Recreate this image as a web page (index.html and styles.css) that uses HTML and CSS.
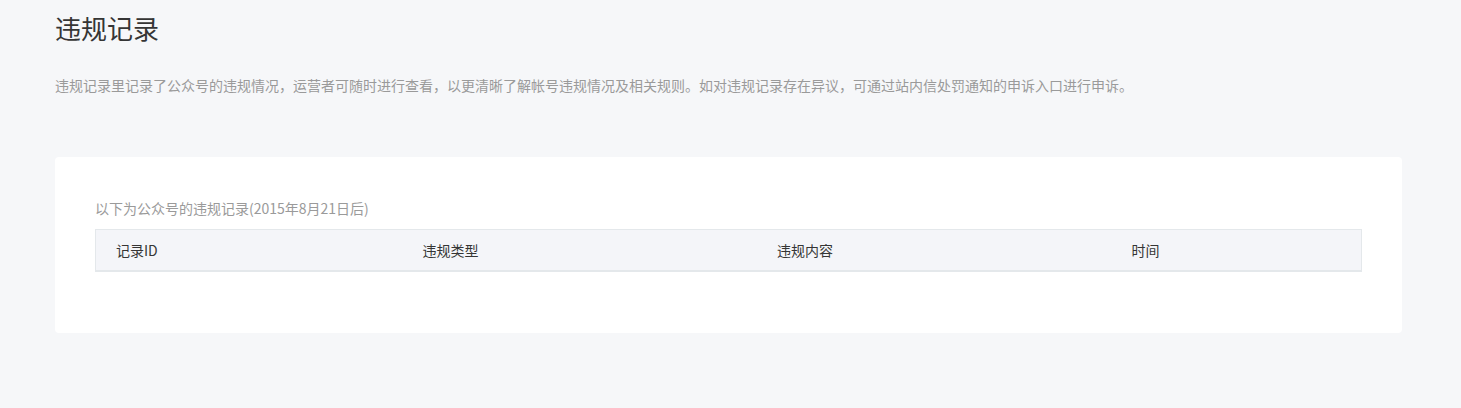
FILE: index.html
```html
<!DOCTYPE html>
<html lang="zh-CN">

<head>
    <meta charset="UTF-8">
    <meta name="viewport" content="width=device-width, initial-scale=1.0">
    <title>违规记录</title>
    <link rel="stylesheet" href="styles.css">
</head>

<body>
    <div class="page">
        <h2 class="page-title">违规记录</h2>
        <p class="page-desc">违规记录里记录了公众号的违规情况，运营者可随时进行查看，以更清晰了解帐号违规情况及相关规则。如对违规记录存在异议，可通过站内信处罚通知的申诉入口进行申诉。</p>

        <div class="card">
            <p class="card-tips">以下为公众号的违规记录(2015年8月21日后)</p>
            <table class="record-table">
                <thead>
                    <tr>
                        <th class="col-id">记录ID</th>
                        <th class="col-type">违规类型</th>
                        <th class="col-content">违规内容</th>
                        <th class="col-time">时间</th>
                    </tr>
                </thead>
                <tbody></tbody>
            </table>
        </div>
    </div>
</body>

</html>
```

FILE: styles.css
```css
* {
    padding: 0;
    margin: 0;
    box-sizing: border-box;
}

body {
    background-color: #f6f7f9;
    font-family: "Noto Sans CJK SC", "Liberation Sans", sans-serif;
    color: #353535;
}

.page {
    padding: 0 59px 0 55px;
}

.page-title {
    margin-top: 10px;
    font-size: 26px;
    line-height: 36px;
    font-weight: 400;
    color: #353535;
}

.page-desc {
    margin-top: 29px;
    font-size: 14px;
    line-height: 20px;
    color: #9a9a9a;
}

.card {
    margin-top: 62px;
    padding: 41px 40px 61px;
    background-color: #fff;
    border-radius: 4px;
}

.card-tips {
    font-size: 14px;
    line-height: 20px;
    color: #9a9a9a;
}

.record-table {
    margin-top: 11px;
    width: 100%;
    border-collapse: collapse;
    table-layout: fixed;
}

.record-table thead tr {
    background-color: #f4f5f9;
    border: 1px solid #e4e8eb;
    border-bottom-width: 2px;
}

.record-table th {
    height: 41px;
    padding: 0 20px;
    text-align: left;
    font-size: 14px;
    font-weight: 400;
    color: #353535;
}

.col-id {
    width: 24.25%;
}

.col-type,
.col-content {
    width: 28%;
}

.col-time {
    width: 19.75%;
}
```
